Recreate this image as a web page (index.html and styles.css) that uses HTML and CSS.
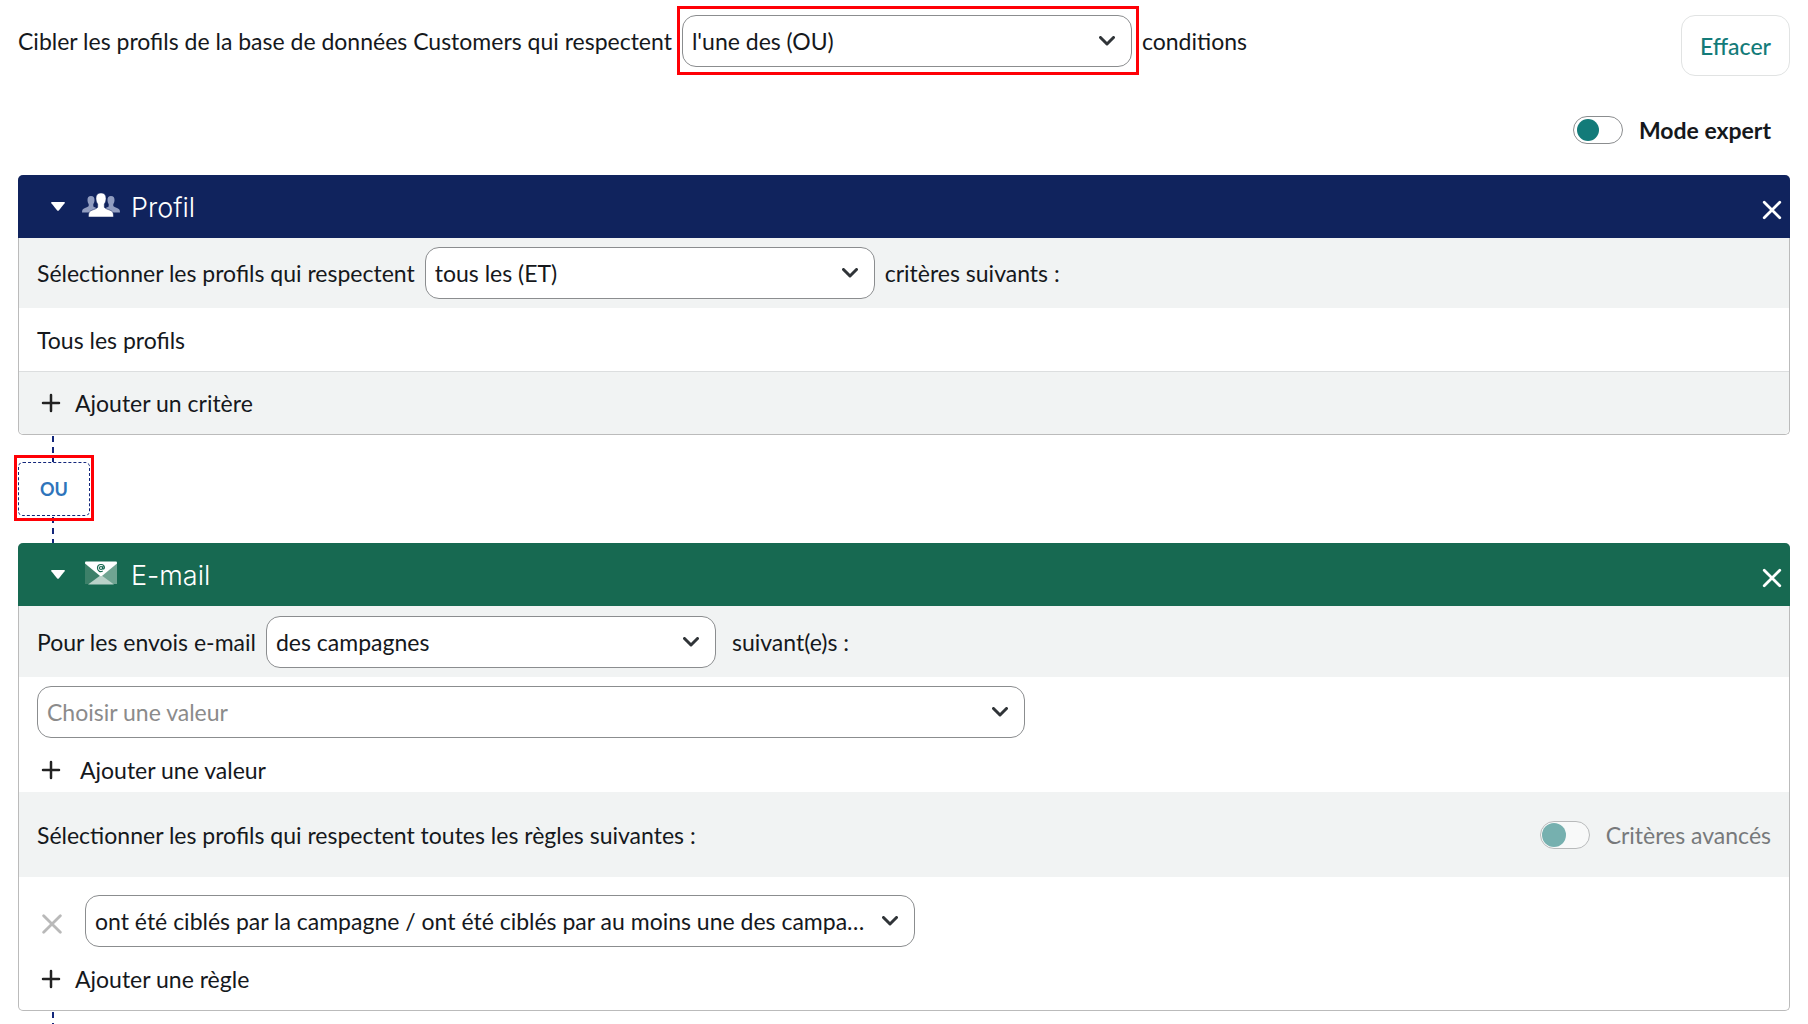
FILE: index.html
```html
<!DOCTYPE html>
<html lang="fr">
<head>
    <meta charset="UTF-8">
    <meta name="viewport" content="width=device-width, initial-scale=1.0">
    <title>Ciblage</title>
    <link rel="stylesheet" href="styles.css">
</head>
<body>
    <header class="topbar">
        <div class="sentence">
            <label for="operator">Cibler les profils de la base de données Customers qui respectent</label>
            <div class="select highlight highlight-select">
                <select id="operator">
                    <option selected>l'une des (OU)</option>
                    <option>toutes les (ET)</option>
                </select>
                <svg class="chevron" viewBox="0 0 16 10"><path d="M1.5 1.5 8 8l6.5-6.5"/></svg>
            </div>
            <span>conditions</span>
        </div>
        <button type="button" class="btn-clear">Effacer</button>
    </header>

    <div class="expert">
        <input type="checkbox" class="toggle" id="expert">
        <label for="expert">Mode expert</label>
    </div>

    <main>
        <!-- Profil -->
        <section class="panel">
            <div class="panel-header profile">
                <button type="button" class="icon-btn" aria-label="Replier">
                    <svg class="caret" viewBox="0 0 14 9"><path d="M1 0h12q1.500 0 .6 1.300L8 8.300q-1 1-2 0L.4 1.300Q-.5 0 1 0z"/></svg>
                </button>
                <svg class="panel-icon" viewBox="0 0 38 24">
                    <g fill="#919dc0">
                        <path d="M9 3c2.500 0 3.500 1.600 3.500 4 0 1.500-.4 3-1.200 4v2.500c1 .8 3 1.300 4 2L11 19.500H0c0-3 .8-3.800 3-4.600 1.700-.6 3.200-1.200 3.700-2V11C5.900 10 5.500 8.500 5.500 7 5.500 4.600 6.500 3 9 3z"/>
                        <path d="M29 3c-2.500 0-3.500 1.600-3.500 4 0 1.500.4 3 1.200 4v2.500c-1 .8-3 1.300-4 2l4.300 4h11c0-3-.8-3.800-3-4.600-1.700-.6-3.200-1.200-3.700-2V11c.8-1 1.200-2.500 1.200-4 0-2.400-1-4-3.500-4z"/>
                    </g>
                    <path d="M19 0c3.600 0 5 2.200 5 5.500 0 2.200-.6 4.200-1.700 5.500v3.200c.8 1.400 3.200 2 5.600 3 3 1.200 3.600 2.300 3.600 6.800h-25c0-4.500.6-5.600 3.600-6.800 2.400-1 4.800-1.600 5.600-3V11C14.600 9.700 14 7.700 14 5.500 14 2.200 15.400 0 19 0z" fill="#fff" stroke="#10235d" stroke-width=".5"/>
                </svg>
                <h2>Profil</h2>
                <button type="button" class="icon-btn close" aria-label="Supprimer">
                    <svg class="cross" viewBox="0 0 18 18"><path d="m2 2 14 14M16 2 2 16"/></svg>
                </button>
            </div>
            <div class="row shaded">
                <label for="criteria">Sélectionner les profils qui respectent</label>
                <div class="select">
                    <select id="criteria">
                        <option selected>tous les (ET)</option>
                        <option>l'un des (OU)</option>
                    </select>
                    <svg class="chevron" viewBox="0 0 16 10"><path d="M1.5 1.5 8 8l6.5-6.5"/></svg>
                </div>
                <span>critères suivants :</span>
            </div>
            <div class="row all-profiles">Tous les profils</div>
            <div class="row shaded add-row">
                <button type="button" class="btn-add">
                    <svg class="plus" viewBox="0 0 20 20"><path d="M10 2v16M2 10h16"/></svg>
                    Ajouter un critère
                </button>
            </div>
        </section>

        <div class="link-line"></div>
        <button type="button" class="operator highlight highlight-operator">OU</button>
        <div class="link-line"></div>

        <!-- E-mail -->
        <section class="panel">
            <div class="panel-header email">
                <button type="button" class="icon-btn" aria-label="Replier">
                    <svg class="caret" viewBox="0 0 14 9"><path d="M1 0h12q1.500 0 .6 1.300L8 8.300q-1 1-2 0L.4 1.300Q-.5 0 1 0z"/></svg>
                </button>
                <svg class="panel-icon" viewBox="0 0 38 24">
                    <path d="M3 2v21h5l13-9z" fill="#3d8069"/>
                    <path d="M35 2v21h-5l-13-9z" fill="#70a492"/>
                    <path d="M6 23.500 19 14l13 9.500z" fill="#b9d2c9"/>
                    <path d="M3 1.500Q3 .5 4 .5h30q1 0 1 1v1L20.500 14.500q-1.500 1.200-3 0L3 2.500z" fill="#fff"/>
                    <g fill="none" stroke="#176951" stroke-width="1.200">
                        <circle cx="19" cy="7" r="1.500"/>
                        <path d="M20.700 5.200v2.500q1.600.7 1.700-1.200c-.2-4.100-6.800-4-6.900.5 0 3.600 3.200 4.300 5.200 3"/>
                    </g>
                </svg>
                <h2>E-mail</h2>
                <button type="button" class="icon-btn close" aria-label="Supprimer">
                    <svg class="cross" viewBox="0 0 18 18"><path d="m2 2 14 14M16 2 2 16"/></svg>
                </button>
            </div>
            <div class="row shaded sendings">
                <label for="source">Pour les envois e-mail</label>
                <div class="select">
                    <select id="source">
                        <option selected>des campagnes</option>
                        <option>des scénarios</option>
                    </select>
                    <svg class="chevron" viewBox="0 0 16 10"><path d="M1.5 1.5 8 8l6.5-6.5"/></svg>
                </div>
                <span class="after">suivant(e)s :</span>
            </div>
            <div class="values">
                <div class="select select-value">
                    <select id="value" class="placeholder" aria-label="Valeur">
                        <option selected>Choisir une valeur</option>
                    </select>
                    <svg class="chevron" viewBox="0 0 16 10"><path d="M1.5 1.5 8 8l6.5-6.5"/></svg>
                </div>
                <button type="button" class="btn-add btn-add-value">
                    <svg class="plus" viewBox="0 0 20 20"><path d="M10 2v16M2 10h16"/></svg>
                    Ajouter une valeur
                </button>
            </div>
            <div class="row shaded rules-title">
                <span>Sélectionner les profils qui respectent toutes les règles suivantes :</span>
                <div class="advanced">
                    <input type="checkbox" class="toggle" id="advanced" disabled>
                    <label for="advanced">Critères avancés</label>
                </div>
            </div>
            <div class="rules">
                <div class="rule">
                    <button type="button" class="icon-btn remove" aria-label="Supprimer la règle">
                        <svg class="cross" viewBox="0 0 18 18"><path d="m1.500 1.500 15 15M16.500 1.500l-15 15"/></svg>
                    </button>
                    <div class="select select-rule">
                        <select id="rule" aria-label="Règle">
                            <option selected>ont été ciblés par la campagne / ont été ciblés par au moins une des campagnes</option>
                        </select>
                        <svg class="chevron" viewBox="0 0 16 10"><path d="M1.5 1.5 8 8l6.5-6.5"/></svg>
                    </div>
                </div>
                <button type="button" class="btn-add">
                    <svg class="plus" viewBox="0 0 20 20"><path d="M10 2v16M2 10h16"/></svg>
                    Ajouter une règle
                </button>
            </div>
        </section>
        <div class="link-line"></div>
    </main>
</body>
</html>
```
FILE: styles.css
```css
* {
    box-sizing: border-box;
}

body {
    margin: 0;
    padding: 15px 18px 0;
    font-family: Lato, sans-serif;
    font-size: 23px;
    line-height: 28px;
    color: #15181c;
    background: #fff;
    overflow: hidden;
}

button, select {
    font: inherit;
    color: inherit;
    background: none;
    border: none;
    padding: 0;
    cursor: pointer;
}

svg {
    display: block;
}

.topbar {
    display: flex;
    justify-content: space-between;
    align-items: flex-start;
}

.sentence {
    display: flex;
    align-items: center;
    gap: 10px;
}

.select {
    position: relative;
    width: 450px;
}

.select select {
    display: block;
    appearance: none;
    width: 100%;
    height: 52px;
    padding: 0 46px 0 9px;
    border: 1px solid #8b8d8f;
    border-radius: 14px;
    background: #fff;
    text-overflow: ellipsis;
}

.select .placeholder {
    color: #8b8b8b;
}

.chevron {
    position: absolute;
    right: 17px;
    top: 21px;
    width: 16px;
    height: 10px;
    fill: none;
    stroke: #303438;
    stroke-width: 3;
    stroke-linecap: round;
    stroke-linejoin: round;
    pointer-events: none;
}

/* red frames drawn over the operator controls */
.highlight {
    position: relative;
}

.highlight::after {
    content: "";
    position: absolute;
    border: 3px solid #ff0006;
    pointer-events: none;
}

.highlight-select::after {
    inset: -9px -7px -8px -5px;
}

.highlight-operator::after {
    inset: -8px -5px -6px -5px;
}

.btn-clear {
    height: 61px;
    padding: 0 18px;
    border: 1px solid #e1e3e3;
    border-radius: 14px;
    color: #137b79;
    font-weight: 500;
}

.expert, .advanced {
    display: flex;
    align-items: center;
    gap: 16px;
}

.expert {
    justify-content: flex-end;
    padding: 40px 19px 31px;
    font-weight: bold;
}

.toggle {
    appearance: none;
    display: flex;
    align-items: center;
    width: 50px;
    height: 28px;
    margin: 0;
    padding: 0 3px;
    border: 1px solid #8b8d8f;
    border-radius: 14px;
    background: #fff;
}

.toggle::before {
    content: "";
    width: 22px;
    height: 22px;
    border-radius: 50%;
    background: #137b79;
}

.panel {
    border: 1px solid #bbb;
    border-top: none;
    border-radius: 5px;
}

.panel-header {
    display: flex;
    align-items: center;
    height: 63px;
    margin: 0 -1px;
    padding: 0 8px 0 33px;
    border-radius: 5px 5px 0 0;
    color: #fff;
}

.profile {
    background: #10235d;
}

.email {
    background: #176951;
}

.panel-header h2 {
    flex: 1;
    margin: 0;
    padding-top: 2px;
    font-family: Inter, sans-serif;
    font-size: 27px;
    font-weight: 300;
}

.caret {
    width: 14px;
    height: 9px;
    fill: #fff;
}

.panel-icon {
    width: 38px;
    height: 24px;
    margin: 0 11px 4px 17px;
}

.cross {
    width: 20px;
    height: 20px;
    fill: none;
    stroke: currentColor;
    stroke-width: 2.5;
    stroke-linecap: round;
}

.close {
    padding-top: 6px;
}

.row {
    display: flex;
    align-items: center;
    min-height: 70px;
    padding: 0 18px;
    gap: 10px;
}

.shaded {
    background: #f1f3f3;
}

.sendings {
    min-height: 71px;
}

.after {
    padding-left: 6px;
}

.all-profiles {
    min-height: 64px;
    border-bottom: 1px solid #dcdedf;
}

.add-row {
    min-height: 62px;
    border-radius: 0 0 5px 5px;
}

.btn-add {
    display: flex;
    align-items: center;
    gap: 14px;
    padding-left: 4px;
}

.btn-add-value {
    gap: 19px;
}

.plus {
    width: 20px;
    height: 20px;
    fill: none;
    stroke: #222;
    stroke-width: 2.5;
    stroke-linecap: round;
}

.link-line {
    width: 2px;
    height: 27px;
    margin-left: 34px;
    background: repeating-linear-gradient(#fff 0 1px, #13277b 1px 7px, #fff 7px 11px);
}

.operator {
    display: block;
    width: 72px;
    height: 54px;
    border: 1px dashed #13277b;
    border-radius: 5px;
    color: #2e74bb;
    font-size: 18px;
    font-weight: bold;
}

.values {
    padding: 9px 18px 8px;
}

.select-value {
    width: 57%;
    margin-bottom: 18px;
}

.rules-title {
    min-height: 85px;
    justify-content: space-between;
}

.advanced {
    color: #77797b;
}

.advanced .toggle {
    padding: 0 1px;
    opacity: 0.55;
}

.advanced .toggle::before {
    width: 24px;
    height: 24px;
}

.rules {
    padding: 18px 18px 17px;
}

.rule {
    display: flex;
    align-items: center;
    gap: 23px;
    margin-bottom: 18px;
    padding-left: 5px;
}

.remove {
    padding-top: 6px;
    color: #b9b9b9;
}

.select-rule {
    width: 48%;
}
```
